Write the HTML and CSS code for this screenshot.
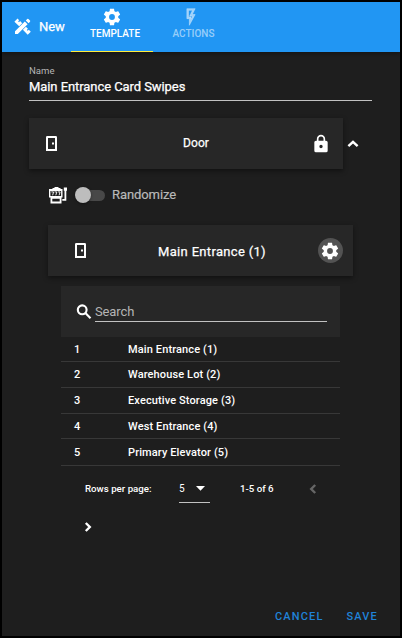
FILE: index.html
```html
<!DOCTYPE html>
<html lang="en">
<head>
<meta charset="utf-8">
<title>New template</title>
<link rel="stylesheet" href="styles.css">
</head>
<body>
<svg class="defs" aria-hidden="true">
  <symbol id="cog" viewBox="0 0 24 24"><path d="M12,15.5A3.5,3.5 0 0,1 8.5,12A3.5,3.5 0 0,1 12,8.5A3.5,3.5 0 0,1 15.5,12A3.5,3.5 0 0,1 12,15.5M19.43,12.97C19.47,12.65 19.5,12.33 19.5,12C19.5,11.67 19.47,11.34 19.43,11L21.54,9.37C21.73,9.22 21.78,8.95 21.66,8.73L19.66,5.27C19.54,5.05 19.27,4.96 19.05,5.05L16.56,6.05C16.04,5.66 15.5,5.32 14.87,5.07L14.5,2.42C14.46,2.18 14.25,2 14,2H10C9.75,2 9.54,2.18 9.5,2.42L9.13,5.07C8.5,5.32 7.96,5.66 7.44,6.05L4.95,5.05C4.73,4.96 4.46,5.05 4.34,5.27L2.34,8.73C2.21,8.95 2.27,9.22 2.46,9.37L4.57,11C4.53,11.34 4.5,11.67 4.5,12C4.5,12.33 4.53,12.65 4.57,12.97L2.46,14.63C2.27,14.78 2.21,15.05 2.34,15.27L4.34,18.73C4.46,18.95 4.73,19.03 4.95,18.95L7.44,17.94C7.96,18.34 8.5,18.68 9.13,18.93L9.5,21.58C9.54,21.82 9.75,22 10,22H14C14.25,22 14.46,21.82 14.5,21.58L14.87,18.93C15.5,18.67 16.04,18.34 16.56,17.94L19.05,18.95C19.27,19.03 19.54,18.95 19.66,18.73L21.66,15.27C21.78,15.05 21.73,14.78 21.54,14.63L19.43,12.97Z"/></symbol>
  <symbol id="door" viewBox="0 0 11 15"><path fill-rule="evenodd" d="M1.3 0H9.7Q11 0 11 1.3V15H0V1.3Q0 0 1.3 0ZM2 2V13H9V2Z"/><path d="M6 6.5H8V8.5H6Z"/></symbol>
</svg>
<div class="dialog">
  <header class="bar">
    <div class="brand">
      <svg class="tools" viewBox="0 0 17 17"><path d="M1 13.2L10.8 3.4L13.6 6.2L3.8 16H1ZM11.8 2.4L13.2 1Q13.8 .5 14.4 1L16 2.6Q16.5 3.2 16 3.8L14.6 5.2Z"/><path d="M.4 3.8L3.5 .6L5.2 2.2L4.1 3.3L5 4.2L6.1 3.1L8.2 5.3L5.2 8.3ZM11.9 8.8L13.9 10.8L12.8 11.9L13.7 12.8L14.8 11.7L16.8 13.7L13.7 16.7L8.9 11.8Z"/></svg>
      <span>New</span>
    </div>
    <div class="tab active"><svg viewBox="0 0 24 24"><use href="#cog"/></svg><span>TEMPLATE</span></div>
    <div class="tab"><svg viewBox="0 0 24 24"><path class="bolt" d="M7,2H17L13.5,9H17L10,22V14H7V2M9,4V12H12V14.66L14,11H10.24L13.76,4H9Z"/></svg><span>ACTIONS</span></div>
  </header>
  <main>
    <div class="field"><div class="label">Name</div><div class="value">Main Entrance Card Swipes</div></div>
    <div class="door-row">
      <div class="panel outer"><svg class="door" viewBox="0 0 11 15"><use href="#door"/></svg><span class="title">Door</span>
        <svg class="lock" viewBox="0 0 24 24"><path d="M12,17A2,2 0 0,0 14,15C14,13.89 13.1,13 12,13A2,2 0 0,0 10,15A2,2 0 0,0 12,17M18,8A2,2 0 0,1 20,10V20A2,2 0 0,1 18,22H6A2,2 0 0,1 4,20V10C4,8.89 4.9,8 6,8H7V6A5,5 0 0,1 12,1A5,5 0 0,1 17,6V8H18M12,3A3,3 0 0,0 9,6V8H15V6A3,3 0 0,0 12,3Z"/></svg></div>
      <svg class="chevron-up" viewBox="0 0 12 8"><path d="M1.4 6.2L6 1.8L10.6 6.2"/></svg>
    </div>
    <div class="random">
      <svg class="slot" viewBox="0 0 18 17"><path fill-rule="evenodd" d="M3.5 1H5L6 0H9L10 1H11.5V2H13.5V10.5H12.5V16.5H1.5V10.5H0V2H3.5ZM1.4 4V9H12.1V4ZM3.3 11.8V14.6H10.7V11.8Z"/><path class="digits" d="M2.3 4.9H4.6L3.6 8.3M5.5 4.9H7.8L6.8 8.3M8.8 4.9H11.1L10.1 8.3"/><path d="M14.8 .5H18V3.7H17.3V13.7H13.3V12H15.5V3.7H14.8Z"/></svg>
      <div class="switch"><div class="knob"></div></div><span>Randomize</span>
    </div>
    <div class="panel inner"><svg class="door" viewBox="0 0 11 15"><use href="#door"/></svg><span class="title">Main Entrance (1)</span>
      <div class="round"><svg viewBox="0 0 24 24"><use href="#cog"/></svg></div></div>
    <section class="list">
      <div class="search"><svg viewBox="0 0 16 16"><circle cx="6.2" cy="5.8" r="4.4"/><path d="M9.4 9L14.5 14.2"/></svg><div class="input">Search</div></div>
      <div class="rows">
        <div class="item"><span>1</span><span>Main Entrance (1)</span></div>
        <div class="item"><span>2</span><span>Warehouse Lot (2)</span></div>
        <div class="item"><span>3</span><span>Executive Storage (3)</span></div>
        <div class="item"><span>4</span><span>West Entrance (4)</span></div>
        <div class="item"><span>5</span><span>Primary Elevator (5)</span></div>
      </div>
      <div class="pager"><span class="per">Rows per page:</span><div class="select"><span>5</span><svg viewBox="0 0 9 5"><path d="M0 0H9L4.5 4.7Z"/></svg></div><span class="range">1-5 of 6</span><svg class="prev" viewBox="0 0 8 10"><path d="M6.2 1L2.2 5L6.2 9"/></svg></div>
      <svg class="next" viewBox="0 0 8 10"><path d="M1.8 1L5.8 5L1.8 9"/></svg>
    </section>
  </main>
  <footer><span class="cancel">CANCEL</span><span class="save">SAVE</span></footer>
</div>
</body>
</html>
```
FILE: styles.css
```css
* { box-sizing: border-box; }
body { margin: 0; background: #000; font-family: Roboto, "Liberation Sans", sans-serif; color: #fff; }
svg { display: block; fill: currentColor; flex: none; }
span { white-space: nowrap; }
.defs { display: none; }
.dialog { width: 402px; height: 638px; border: 2px solid #000; background: #1e1e1e; display: flex; flex-direction: column; overflow: hidden; }
.bar { height: 50px; flex: none; background: #2196f3; display: flex; box-shadow: 0 2px 5px rgba(0,0,0,.35); }
.brand { width: 69px; padding: 0 0 1px 12px; display: flex; align-items: center; gap: 8px; font-size: 13px; letter-spacing: -.1px; -webkit-text-stroke: .25px currentColor; }
.tools { width: 17px; height: 17px; }
.tab { width: 82px; display: flex; flex-direction: column; align-items: center; padding-top: 5px; font-size: 10px; font-weight: 500; line-height: 12px; color: rgba(255,255,255,.55); border-bottom: 1px solid transparent; }
.tab + .tab { width: 75px; }
.tab svg { width: 20px; height: 20px; margin-bottom: 1px; }
.bolt { stroke: currentColor; stroke-width: .7; }
.tab + .tab span { margin-left: 6px; }
.tab.active { color: #fff; border-color: #ffeb3b; }
.tab.active span { margin-left: 6px; }
main { flex: 1; padding: 13px 0 0 27px; }
.field { width: 343px; height: 36px; border-bottom: 1px solid #c2c2c2; }
.label { font-size: 9.6px; line-height: 12px; color: #b5b5b5; }
.value { font-size: 13px; line-height: 20px; letter-spacing: -.07px; -webkit-text-stroke: .25px currentColor; }
.door-row { display: flex; align-items: center; margin-top: 17px; gap: 4px; }
.panel { height: 51px; background: #272727; box-shadow: 0 2px 5px rgba(0,0,0,.45); display: flex; align-items: center; }
.outer { width: 314px; padding: 0 12px 0 17px; }
.title { flex: 1; text-align: center; font-size: 13px; letter-spacing: .32px; padding-left: 20px; -webkit-text-stroke: .25px currentColor; }
.outer .title { font-size: 12px; letter-spacing: .1px; padding: 0 0 2px 24px; }
.door { width: 11px; height: 15px; }
.lock { width: 20px; height: 20px; }
.chevron-up { width: 12px; height: 8px; }
.chevron-up path, .prev path, .next path { fill: none; stroke: currentColor; stroke-width: 2.4; }
.random { display: flex; align-items: center; height: 20px; margin: 16px 0 20px 20px; font-size: 13px; color: #b8b8b8; }
.random span { -webkit-text-stroke: .2px currentColor; padding-bottom: 1px; letter-spacing: -.08px; }
.slot { width: 18px; height: 17px; color: #fff; }
.digits { fill: none; stroke: #fff; stroke-width: .9; }
.switch { width: 29px; height: 11px; border-radius: 6px; background: #484848; margin: 0 7px 0 9px; display: flex; align-items: center; }
.knob { width: 16px; height: 16px; flex: none; margin-left: -1px; border-radius: 50%; background: #bdbdbd; box-shadow: 0 1px 3px rgba(0,0,0,.4); }
.inner { width: 305px; margin-left: 19px; padding: 0 10px 0 27px; }
.inner .title { padding-top: 1px; }
.round { width: 25px; height: 25px; border-radius: 50%; background: #535353; display: flex; align-items: center; padding-left: 2px; }
.round svg { width: 20px; height: 20px; }
.list { width: 279px; margin: 10px 0 0 32px; }
.search { height: 51px; background: #272727; padding: 15px 13px 0 15px; display: flex; gap: 3px; }
.search svg { width: 16px; height: 16px; margin-top: 3px; fill: none; stroke: #fff; stroke-width: 2.1; }
.input { flex: 1; height: 21px; border-bottom: 1px solid #c2c2c2; font-size: 13px; line-height: 22px; letter-spacing: -.12px; color: #b5b5b5; }
.rows { height: 129px; display: grid; grid-template-rows: 25px 26px 26px 25px 27px; }
.item { border-bottom: 1px solid #383838; display: grid; grid-template-columns: 54px 1fr; align-items: center; padding-left: 13px; font-size: 11px; font-weight: 500; letter-spacing: .12px; }
.pager { height: 37px; display: flex; align-items: center; padding: 9px 0 0 24px; font-size: 9.7px; font-weight: 500; line-height: 28px; }
.per { width: 94px; }
.select { width: 31px; height: 28px; border-bottom: 1px solid #c2c2c2; display: flex; align-items: center; justify-content: space-between; padding-right: 5px; }
.select span { font-weight: 400; font-size: 10px; }
.select svg { width: 9px; height: 5px; }
.range { width: 69px; margin-left: 30px; }
.prev { width: 8px; height: 10px; color: #666; }
.next { width: 8px; height: 10px; margin: 19px 0 0 23px; }
footer { height: 39px; flex: none; display: flex; gap: 23px; padding: 13px 0 0 273px; font-size: 11px; line-height: 14px; font-weight: 500; letter-spacing: 1.15px; color: #2083d8; }
```
